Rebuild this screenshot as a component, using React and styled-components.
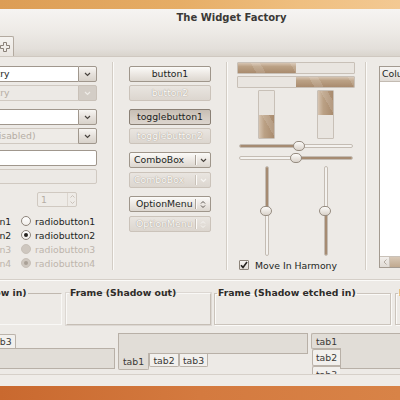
import React from "react";
import styled, { createGlobalStyle, css } from "styled-components";

const GlobalStyle = createGlobalStyle`
  html, body { margin: 0; padding: 0; }
  body { width: 400px; height: 400px; overflow: hidden; background: #d3763a; }
  *, *::before, *::after { box-sizing: border-box; }
`;

const FONT = `"DejaVu Sans", "Liberation Sans", sans-serif`;
const TEXT = "#221f1d";
const DIS = "#b5ada4";

const Screen = styled.div`
  width: 400px; height: 400px; overflow: hidden;
  display: flex; flex-direction: column;
  font-family: ${FONT}; font-size: 9.3px; color: ${TEXT};
`;
const DesktopTop = styled.div`
  flex: none; height: 9px;
  background: linear-gradient(90deg, #dc9d55 0%, #e6ad66 45%, #efbf80 75%, #f3c993 100%);
`;
const DesktopBottom = styled.div`
  flex: 1;
  background: linear-gradient(90deg, #c9692f 0%, #d47a3f 50%, #d88347 100%);
`;
const Window = styled.div`
  flex: none; width: 627px; height: 377px; margin-left: -82px;
  display: flex; flex-direction: column; background: #edeae6;
`;
const Header = styled.div`
  flex: none; height: 48px; display: flex; flex-direction: column;
  background: linear-gradient(180deg, #f6f4f2 0%, #eeebe7 45%, #e3dfda 85%, #d9d4cd 100%);
  border-bottom: 1px solid #cfc8c0;
`;
const Title = styled.div`
  padding-top: 3px; text-align: center; font-weight: bold; font-size: 10px;
  line-height: 12px; color: #3b3936;
`;
const Toolbar = styled.div`
  margin-top: auto; height: 20px; display: flex; padding-left: 77px;
`;
const ToolButton = styled.div`
  width: 19px; border: 1px solid #b3aaa0; border-bottom: none; border-radius: 2px 2px 0 0;
  background: linear-gradient(#f5f3f0, #e9e5e0);
  display: flex; align-items: center; justify-content: center;
`;
const Body = styled.div`
  flex: none; height: 317px; overflow: hidden; padding-top: 5px;
  display: flex; flex-direction: column;
`;
const TopRow = styled.div`flex: none; height: 208px; display: flex;`;
const Column = styled.div`
  flex: none; width: ${p => p.$w}px; margin-left: ${p => p.$ml}px;
  padding-top: ${p => p.$pt || 0}px; display: flex; flex-direction: column;
`;
const VSep = styled.div`
  flex: none; width: 2px; margin-left: ${p => p.$ml}px;
  border-left: 1px solid #d3cdc5; border-right: 1px solid #fbfaf8;
`;
const HSep = styled.div`
  flex: none; height: 2px; margin-top: ${p => p.$mt}px;
  border-top: 1px solid #d5cfc8; border-bottom: 1px solid #fbfaf8;
`;

/* ---------- entries / combos ---------- */
const ComboEntry = styled.div`
  flex: none; display: flex; height: 16px; margin-top: ${p => p.$mt || 0}px;
`;
const EntryField = styled.div`
  flex: 1; min-width: 0; overflow: hidden; white-space: nowrap;
  border: 1px solid ${p => (p.$disabled ? "#d0c9c1" : "#a0978d")};
  border-right: none; border-radius: 2px 0 0 2px;
  background: ${p => p.$bg || "#fff"};
  color: ${p => (p.$grey ? DIS : TEXT)};
  padding-left: ${p => p.$pl ?? 3}px; line-height: 14px;
`;
const ArrowButton = styled.div`
  flex: none; width: 19px; display: flex; align-items: center; justify-content: center;
  border: 1px solid #a0978d; border-radius: 0 2px 2px 0;
  background: linear-gradient(#f8f6f3, #e6e1dc 50%, #d8d2ca);
  ${p => p.$disabled && css`
    background: #d3cdc6; border-color: #c9c1b8;
  `}
`;
const Entry = styled.div`
  flex: none; height: ${p => p.$h}px; margin-top: ${p => p.$mt}px;
  border: 1px solid ${p => (p.$disabled ? "#d0c9c1" : "#a0978d")};
  background: ${p => (p.$disabled ? "#ece9e5" : "#fff")};
  border-radius: 2px;
`;
const Spin = styled.div`
  flex: none; display: flex; width: 40px; height: 15px; margin: 8px 0 0 101px;
  border: 1px solid #d0c9c1; background: #eeebe7; color: ${DIS}; border-radius: 2px;
`;
const SpinText = styled.div`flex: 1; padding-left: 3px; line-height: 13px;`;
const SpinArrows = styled.div`
  width: 9px; border-left: 1px solid #dcd6cf;
  display: flex; flex-direction: column; align-items: center; justify-content: space-evenly;
`;
const RadioGrid = styled.div`
  flex: none; display: grid; grid-template-columns: 84px 1fr; grid-auto-rows: 14px;
  margin-top: 7px; padding-left: 1px;
`;
const RadioItem = styled.div`
  display: flex; align-items: center; gap: 4px; white-space: nowrap;
  color: ${p => (p.$disabled ? "#bdb5ac" : TEXT)};
`;
const RadioCircle = styled.span`
  flex: none; width: 10px; height: 10px; border-radius: 50%;
  display: flex; align-items: center; justify-content: center;
  border: 1px solid #8e857b; background: linear-gradient(#ffffff, #f1eeea);
  ${p => p.$disabled && css`border-color: #c8c1b9; background: #cec7bf;`}
`;
const RadioDot = styled.span`
  width: 4px; height: 4px; border-radius: 50%;
  background: ${p => (p.$disabled ? "#a9a096" : "#26231f")};
`;

/* ---------- buttons ---------- */
const Button = styled.div`
  flex: none; height: 16px; margin-top: ${p => p.$mt || 0}px;
  border: 1px solid #9f968b; border-radius: 2px;
  background: linear-gradient(#fbfaf8, #ece8e3 50%, #dcd6cf);
  display: flex; align-items: center; justify-content: center;
  line-height: 14px; white-space: nowrap; color: ${TEXT};
  ${p => p.$pressed && css`
    background: linear-gradient(#c7beb4, #d4ccc3 55%, #dcd5ce);
    border-color: #8a8075;
  `}
  ${p => p.$disabled && css`
    background: linear-gradient(#e9e5e0, #dcd6cf);
    border-color: #cbc3ba; color: #fbfaf8;
    text-shadow: 0 0 1px #a89e93, 0 0 1px #b3aa9f;
  `}
`;
const ComboButton = styled(Button)`
  justify-content: flex-start; padding-left: ${p => p.$pl}px;
`;
const ComboLabel = styled.span`flex: 1;`;
const ComboDivider = styled.span`
  width: 1px; align-self: stretch; margin: 2px 0;
  background: ${p => (p.$disabled ? "#c9c1b8" : "#aba298")};
  box-shadow: 1px 0 0 #fbfaf8;
`;
const ComboIcon = styled.span`
  width: 14px; display: flex; align-items: center; justify-content: center;
`;

/* ---------- progress / scales ---------- */
const fillH = css`
  background:
    repeating-linear-gradient(60deg, rgba(255,255,255,0) 0 16px, rgba(255,255,255,0.13) 16px 24px, rgba(255,255,255,0) 24px 34px),
    linear-gradient(180deg, #d6c4b1 0%, #bba185 35%, #a98b6e 100%);
`;
const fillV = css`
  background:
    repeating-linear-gradient(60deg, rgba(255,255,255,0) 0 14px, rgba(255,255,255,0.13) 14px 20px, rgba(255,255,255,0) 20px 30px),
    linear-gradient(90deg, #d6c4b1 0%, #bba185 35%, #a98b6e 100%);
`;
const ProgressH = styled.div`
  flex: none; height: 12px; margin-top: ${p => p.$mt || 0}px;
  border: 1px solid #c8c0b7; background: #e9e5e0; border-radius: 1px; overflow: hidden;
  display: flex; justify-content: ${p => (p.$end ? "flex-end" : "flex-start")};
`;
const ProgressFillH = styled.div`height: 100%; ${fillH}`;
const PairRow = styled.div`
  flex: none; display: flex; height: ${p => p.$h}px; margin-top: ${p => p.$mt}px;
`;
const PairCell = styled.div`flex: 1; display: flex; justify-content: center; position: relative;`;
const ProgressV = styled.div`
  width: 17px; height: 100%; border: 1px solid #c8c0b7; background: #e9e5e0;
  border-radius: 1px; overflow: hidden;
  display: flex; flex-direction: column; justify-content: ${p => (p.$end ? "flex-end" : "flex-start")};
`;
const ProgressFillV = styled.div`width: 100%; ${fillV}`;
const ScaleH = styled.div`
  flex: none; position: relative; height: 10px; margin-top: 2px; padding: 0 2px;
  display: flex; align-items: center;
`;
const Trough = styled.div`
  flex: 1; display: flex; overflow: hidden; border-radius: 2px;
  border: 1px solid #c4bcb3; background: #f4f2ef;
  ${p => (p.$vertical
    ? css`width: 4px; flex-direction: ${p.$reverse ? "column-reverse" : "column"};`
    : css`height: 4px; flex-direction: ${p.$reverse ? "row-reverse" : "row"};`)}
`;
const TroughFill = styled.div`
  background: #a58b72; flex: none;
  ${p => (p.$vertical ? "width: 100%;" : "height: 100%;")}
`;
const Knob = styled.div`
  position: absolute; width: 12px; height: 10px;
  border: 1px solid #968c81; border-radius: 5px;
  background: linear-gradient(#fcfbf9, #e8e3dd 60%, #d9d2ca);
`;
const ScaleV = styled.div`
  height: 100%; display: flex; flex-direction: column; align-items: center; padding: 1px 0;
`;
const CheckRow = styled.div`
  flex: none; display: flex; align-items: center; gap: 6px; height: 10px;
  margin-top: 3px; padding-left: 2px; white-space: nowrap;
`;
const CheckBox = styled.span`
  width: 10px; height: 10px; border: 1px solid #8d847a; border-radius: 1px;
  background: linear-gradient(#f8f6f3, #e1dcd6);
  display: flex; align-items: center; justify-content: center;
`;

/* ---------- tree view ---------- */
const Tree = styled.div`
  flex: none; width: 160px; height: 202px; border: 1px solid #a39a90;
  background: #fff; display: flex; flex-direction: column;
`;
const TreeHeader = styled.div`
  flex: none; height: 15px; line-height: 14px; padding-left: 2px;
  border-bottom: 1px solid #c3bbb2; background: linear-gradient(#f7f5f3, #e1dcd6);
`;
const TreeList = styled.div`flex: 1;`;
const HScroll = styled.div`
  flex: none; height: 11px; display: flex; border-top: 1px solid #c9c1b8; background: #e7e3de;
`;
const ScrollArrow = styled.div`
  width: 10px; display: flex; align-items: center; justify-content: center;
  border-right: 1px solid #cbc3ba; background: linear-gradient(#f2efec, #e0dbd5);
`;
const ScrollThumb = styled.div`
  width: 90px; background: linear-gradient(#d8c8b6, #c0a98f); border-right: 1px solid #a98f75;
`;

/* ---------- frames ---------- */
const FrameRow = styled.div`flex: none; display: flex; margin-top: 6px; padding-left: 6px;`;
const Frame = styled.fieldset`
  flex: none; margin: 0 0 0 ${p => p.$ml}px; padding: 0; min-width: 0;
  width: ${p => p.$w}px; height: 38px;
  border: 1px solid #cbc4bc; border-radius: 0;
  ${p => p.$kind === "in" && css`border-color: #c0b8af #f9f8f6 #f9f8f6 #c0b8af;`}
  ${p => p.$kind === "out" && css`border-color: #f9f8f6 #c6beb5 #c6beb5 #f9f8f6; box-shadow: 0 0 0 1px rgba(190,181,171,0.35);`}
  ${p => p.$kind === "etched" && css`box-shadow: inset 1px 1px 0 #fbfaf8, 1px 1px 0 #fbfaf8;`}
`;
const FrameLabel = styled.legend`
  margin-left: 2px; padding: 0 1px; font-weight: bold; line-height: 12px;
  white-space: nowrap; color: #2e2c29;
`;

/* ---------- notebooks ---------- */
const NotebookRow = styled.div`flex: none; display: flex; margin-top: 8px; padding-left: 6px;`;
const Notebook = styled.div`
  flex: none; width: ${p => p.$w}px; margin-left: ${p => p.$ml || 0}px;
  display: flex; flex-direction: ${p => p.$dir};
`;
const TabStrip = styled.div`
  flex: none; display: flex; padding-left: ${p => p.$pl || 0}px;
  align-items: ${p => p.$align};
  flex-direction: ${p => (p.$column ? "column" : "row")};
  ${p => p.$column && "width: 29px;"}
`;
const Tab = styled.div`
  position: relative; flex: none; display: flex; align-items: center; justify-content: center;
  color: #3a3835; border: 1px solid #bbb3aa; background: #f2f0ed; white-space: nowrap;
  width: ${p => p.$w}px; height: ${p => p.$h}px;
  ${p => p.$side === "top" && css`border-bottom: none; border-radius: 2px 2px 0 0;`}
  ${p => p.$side === "bottom" && css`border-top: none; border-radius: 0 0 2px 2px;`}
  ${p => p.$side === "left" && css`border-right: none; border-radius: 2px 0 0 2px;`}
  ${p => p.$active && css`
    z-index: 1; background: #e1ddd7;
    ${p.$side === "top" && "margin-bottom: -1px;"}
    ${p.$side === "bottom" && "margin-top: -1px;"}
    ${p.$side === "left" && "margin-right: -1px;"}
  `}
`;
const Pane = styled.div`
  flex: ${p => (p.$grow ? 1 : "none")}; height: ${p => p.$h}px;
  border: 1px solid #b8b0a7; background: #e1ddd7;
`;
const StatusStrip = styled.div`
  flex: none; height: 12px; border-top: 1px solid #d6d0c9; background: #efece8;
`;

/* ---------- icons ---------- */
const Chevron = ({ color = "#4a4540" }) => (
  <svg width="7" height="5" viewBox="0 0 7 5">
    <path d="M1 1 L3.5 3.5 L6 1" fill="none" stroke={color} strokeWidth="1.2" />
  </svg>
);
const UpDown = ({ color = "#5a544e" }) => (
  <svg width="6" height="9" viewBox="0 0 6 9">
    <path d="M1 3.5 L3 1.5 L5 3.5 M1 5.5 L3 7.5 L5 5.5" fill="none" stroke={color} strokeWidth="1" />
  </svg>
);
const TinyArrow = ({ up }) => (
  <svg width="5" height="3" viewBox="0 0 5 3">
    <path d={up ? "M0.5 2.5 L2.5 0.5 L4.5 2.5" : "M0.5 0.5 L2.5 2.5 L4.5 0.5"} fill="none" stroke="#c4bcb3" strokeWidth="0.9" />
  </svg>
);
const LeftArrow = () => (
  <svg width="4" height="6" viewBox="0 0 4 6">
    <path d="M3.5 0.5 L1 3 L3.5 5.5" fill="none" stroke="#b3aaa0" strokeWidth="1" />
  </svg>
);
const PlusIcon = () => (
  <svg width="10" height="10" viewBox="0 0 10 10">
    <path d="M3.5 0.5h3v3h3v3h-3v3h-3v-3h-3v-3h3z" fill="#f1eeea" stroke="#8b8279" strokeWidth="1" />
  </svg>
);
const CheckMark = () => (
  <svg width="8" height="8" viewBox="0 0 8 8">
    <path d="M1 4.2 L3 6.4 L7 1" fill="none" stroke="#26231f" strokeWidth="1.6" />
  </svg>
);

const HSlider = ({ value, fromEnd }) => {
  const pos = 2 + value * 114;
  return (
    <ScaleH>
      <Trough $reverse={fromEnd}>
        <TroughFill style={{ width: `${(fromEnd ? 1 - value : value) * 100}%` }} />
      </Trough>
      <Knob style={{ left: pos - 6, top: 0 }} />
    </ScaleH>
  );
};

const VSlider = ({ value, fromEnd }) => {
  const pos = 1 + value * 90;
  return (
    <PairCell>
      <ScaleV>
        <Trough $vertical $reverse={fromEnd}>
          <TroughFill $vertical style={{ height: `${(fromEnd ? 1 - value : value) * 100}%` }} />
        </Trough>
      </ScaleV>
      <Knob style={{ top: pos - 5, left: "calc(50% - 6.5px)" }} />
    </PairCell>
  );
};

export default function App() {
  const radios = [
    { n: 1, checked: false, disabled: false },
    { n: 2, checked: true, disabled: false },
    { n: 3, checked: false, disabled: true },
    { n: 4, checked: true, disabled: true },
  ];
  return (
    <Screen>
      <GlobalStyle />
      <DesktopTop />
      <Window>
        <Header>
          <Title>The Widget Factory</Title>
          <Toolbar>
            <ToolButton><PlusIcon /></ToolButton>
          </Toolbar>
        </Header>
        <Body>
          <TopRow>
            <Column $w={161} $ml={18} $pt={4}>
              <ComboEntry>
                <EntryField $pl={0}>comboboxentry</EntryField>
                <ArrowButton><Chevron /></ArrowButton>
              </ComboEntry>
              <ComboEntry $mt={3}>
                <EntryField $pl={0} $disabled $grey $bg="#ece9e5">comboboxentry</EntryField>
                <ArrowButton $disabled><Chevron color="#eeebe7" /></ArrowButton>
              </ComboEntry>
              <ComboEntry $mt={8}>
                <EntryField />
                <ArrowButton><Chevron /></ArrowButton>
              </ComboEntry>
              <ComboEntry $mt={3}>
                <EntryField $pl={1} $disabled $grey $bg="#eeebe7">combobox (disabled)</EntryField>
                <ArrowButton><Chevron /></ArrowButton>
              </ComboEntry>
              <Entry $h={16} $mt={6} />
              <Entry $h={15} $mt={3} $disabled />
              <Spin>
                <SpinText>1</SpinText>
                <SpinArrows><TinyArrow up /><TinyArrow /></SpinArrows>
              </Spin>
              <RadioGrid>
                {radios.map(r => (
                  <React.Fragment key={r.n}>
                    <RadioItem $disabled={r.disabled}>
                      <RadioCircle $disabled={r.disabled}>{r.checked && <RadioDot $disabled={r.disabled} />}</RadioCircle>
                      radiobutton{r.n}
                    </RadioItem>
                    <RadioItem $disabled={r.disabled}>
                      <RadioCircle $disabled={r.disabled}>{r.checked && <RadioDot $disabled={r.disabled} />}</RadioCircle>
                      radiobutton{r.n}
                    </RadioItem>
                  </React.Fragment>
                ))}
              </RadioGrid>
            </Column>
            <VSep $ml={15} />
            <Column $w={82} $ml={15} $pt={4}>
              <Button>button1</Button>
              <Button $mt={3} $disabled>button2</Button>
              <Button $mt={8} $pressed>togglebutton1</Button>
              <Button $mt={3} $disabled>togglebutton2</Button>
              <ComboButton $mt={8} $pl={4}>
                <ComboLabel>ComboBox</ComboLabel>
                <ComboDivider />
                <ComboIcon><Chevron /></ComboIcon>
              </ComboButton>
              <ComboButton $mt={4} $pl={4} $disabled>
                <ComboLabel>ComboBox</ComboLabel>
                <ComboDivider $disabled />
                <ComboIcon><Chevron color="#f6f4f1" /></ComboIcon>
              </ComboButton>
              <ComboButton $mt={8} $pl={6}>
                <ComboLabel>OptionMenu</ComboLabel>
                <ComboDivider />
                <ComboIcon><UpDown /></ComboIcon>
              </ComboButton>
              <ComboButton $mt={4} $pl={6} $disabled>
                <ComboLabel>OptionMenu</ComboLabel>
                <ComboDivider $disabled />
                <ComboIcon><UpDown color="#f6f4f1" /></ComboIcon>
              </ComboButton>
            </Column>
            <VSep $ml={15} />
            <Column $w={118} $ml={9}>
              <ProgressH><ProgressFillH style={{ width: "50%" }} /></ProgressH>
              <ProgressH $mt={2} $end><ProgressFillH style={{ width: "50%" }} /></ProgressH>
              <PairRow $h={49} $mt={2}>
                <PairCell><ProgressV $end><ProgressFillV style={{ height: "50%" }} /></ProgressV></PairCell>
                <PairCell><ProgressV><ProgressFillV style={{ height: "50%" }} /></ProgressV></PairCell>
              </PairRow>
              <HSlider value={0.526} />
              <HSlider value={0.5} fromEnd />
              <PairRow $h={92} $mt={2}>
                <VSlider value={0.5} />
                <VSlider value={0.5} fromEnd />
              </PairRow>
              <CheckRow>
                <CheckBox><CheckMark /></CheckBox>
                Move In Harmony
              </CheckRow>
            </Column>
            <VSep $ml={10} />
            <Column $w={160} $ml={12} $pt={4}>
              <Tree>
                <TreeHeader>Column 1</TreeHeader>
                <TreeList />
                <HScroll>
                  <ScrollArrow><LeftArrow /></ScrollArrow>
                  <ScrollThumb />
                </HScroll>
              </Tree>
            </Column>
          </TopRow>
          <HSep $mt={9} />
          <FrameRow>
            <Frame $w={138} $ml={0} $kind="in"><FrameLabel>Frame (Shadow in)</FrameLabel></Frame>
            <Frame $w={145} $ml={4} $kind="out"><FrameLabel>Frame (Shadow out)</FrameLabel></Frame>
            <Frame $w={177} $ml={3} $kind="etched"><FrameLabel>Frame (Shadow etched in)</FrameLabel></Frame>
            <Frame $w={150} $ml={4} $kind="etched"><FrameLabel>Frame (Shadow etched out)</FrameLabel></Frame>
          </FrameRow>
          <NotebookRow>
            <Notebook $w={191} $dir="column">
              <TabStrip $align="flex-end" $pl={2}>
                <Tab $side="top" $active $w={30} $h={16}>tab1</Tab>
                <Tab $side="top" $w={30} $h={14}>tab2</Tab>
                <Tab $side="top" $w={30} $h={14}>tab3</Tab>
              </TabStrip>
              <Pane $h={21} />
            </Notebook>
            <Notebook $w={190} $ml={3} $dir="column">
              <Pane $h={21} />
              <TabStrip $align="flex-start">
                <Tab $side="bottom" $active $w={31} $h={17}>tab1</Tab>
                <Tab $side="bottom" $w={30} $h={13}>tab2</Tab>
                <Tab $side="bottom" $w={29} $h={13}>tab3</Tab>
              </TabStrip>
            </Notebook>
            <Notebook $w={200} $ml={3} $dir="row">
              <TabStrip $column $align="flex-end">
                <Tab $side="left" $active $w={30} $h={16}>tab1</Tab>
                <Tab $side="left" $w={28} $h={17}>tab2</Tab>
                <Tab $side="left" $w={28} $h={17}>tab3</Tab>
              </TabStrip>
              <Pane $h={36} $grow />
            </Notebook>
          </NotebookRow>
        </Body>
        <StatusStrip />
      </Window>
      <DesktopBottom />
    </Screen>
  );
}
